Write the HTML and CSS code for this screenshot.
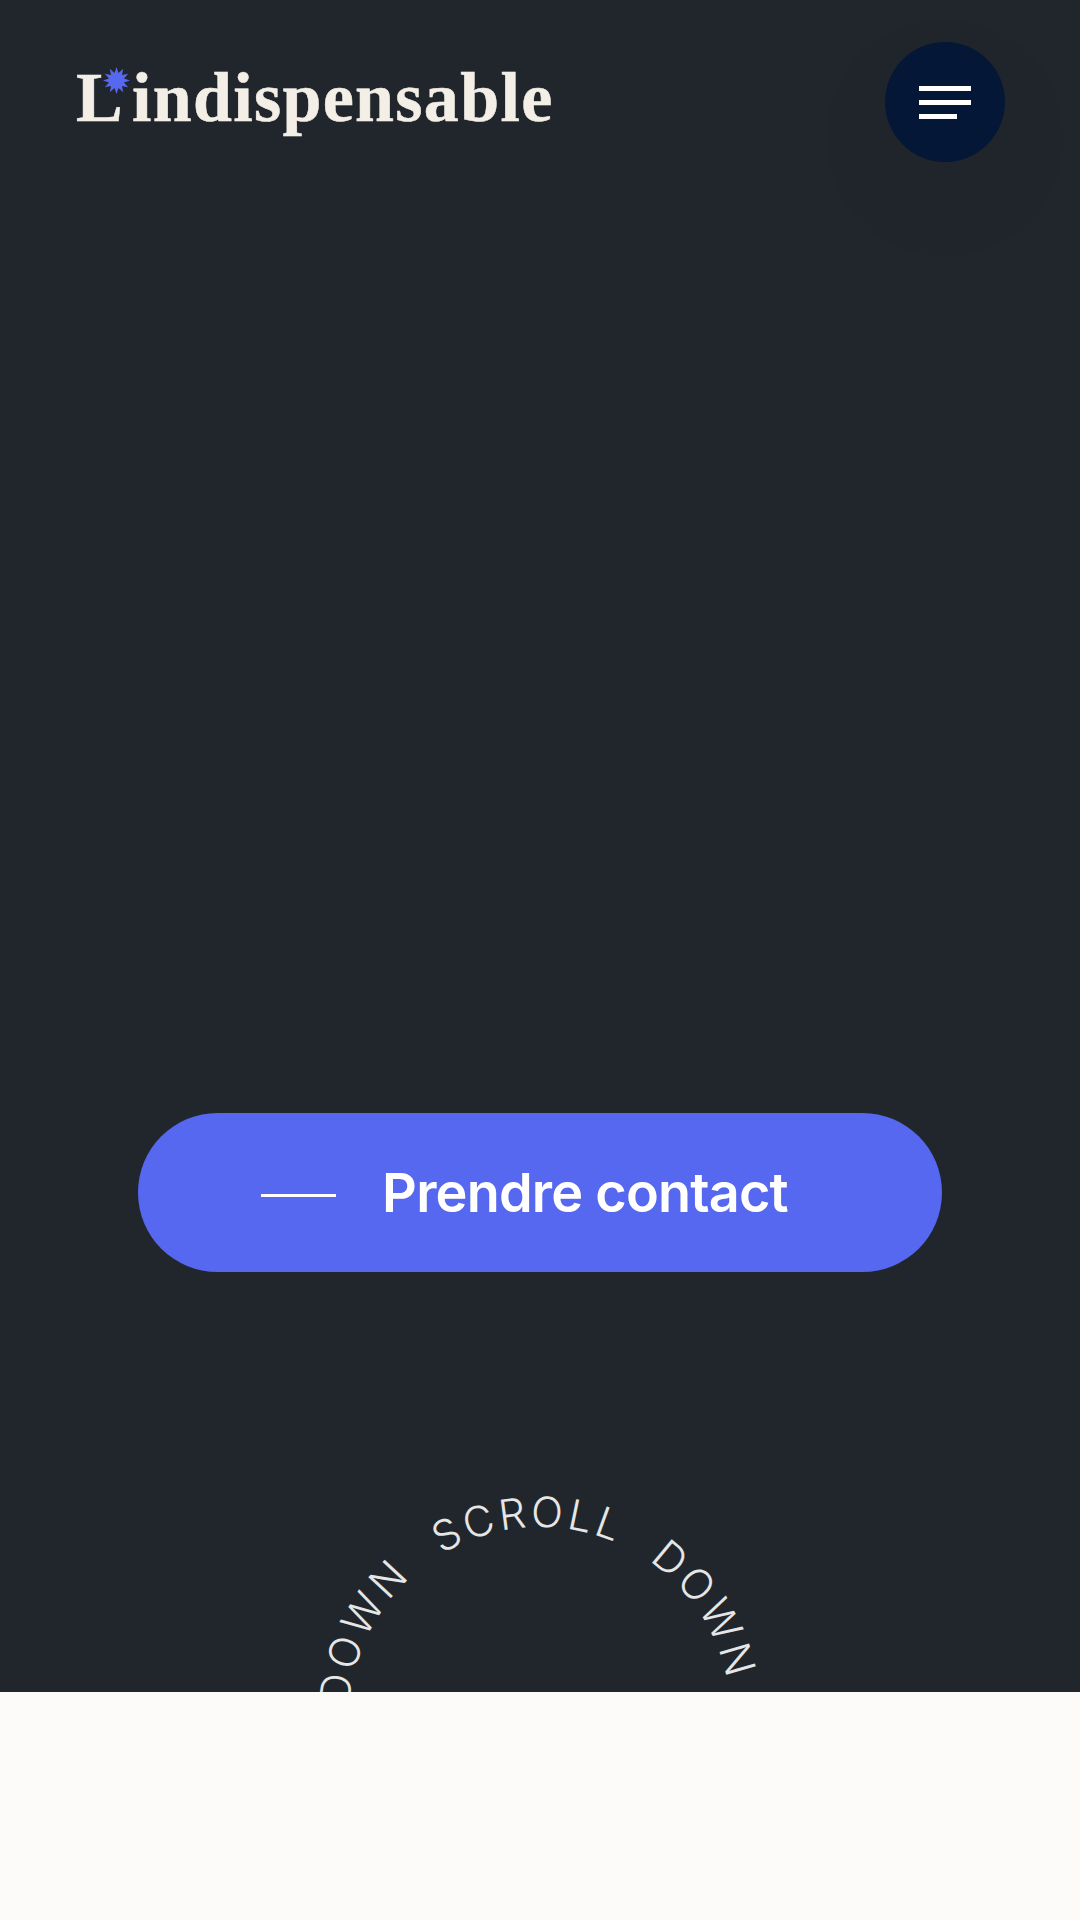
FILE: index.html
```html
<!doctype html>
<html lang="fr">
<head>
  <meta charset="utf-8">
  <title>L'indispensable</title>
  <link rel="stylesheet" href="styles.css">
</head>
<body>
<section class="hero">
  <header class="hero__header">
    <a class="logo" href="#">
      <span class="logo__cap">L</span>indispensable
      <svg class="logo__star" viewBox="-14 -14 28 28">
        <polygon points="0,-14 2.07,-7.73 7,-12.12 5.66,-5.66 12.12,-7 7.73,-2.07 14,0 7.73,2.07 12.12,7 5.66,5.66 7,12.12 2.07,7.73 0,14 -2.07,7.73 -7,12.12 -5.66,5.66 -12.12,7 -7.73,2.07 -14,0 -7.73,-2.07 -12.12,-7 -5.66,-5.66 -7,-12.12 -2.07,-7.73"/>
      </svg>
    </a>
    <button class="menuButton" type="button" aria-label="Menu">
      <span class="menuButton__line"></span>
      <span class="menuButton__line"></span>
      <span class="menuButton__line menuButton__line--short"></span>
    </button>
  </header>

  <a class="cta" href="#">
    <span class="cta__dash"></span>
    Prendre contact
  </a>

  <svg class="scrollRing" viewBox="0 0 480 480">
    <defs>
      <path id="ringPath" d="M240,49 a191,191 0 1,1 -0.01,0"/>
    </defs>
    <g class="scrollRing__text">
      <text transform="rotate(-31 240 240)"><textPath href="#ringPath">SCROLL DOWN</textPath></text>
      <text transform="rotate(89 240 240)"><textPath href="#ringPath">SCROLL DOWN</textPath></text>
      <text transform="rotate(208 240 240)"><textPath href="#ringPath">SCROLL DOWN</textPath></text>
    </g>
  </svg>
</section>
<section class="next"></section>
</body>
</html>
```

FILE: styles.css
```css
body {
  margin: 0;
  background-color: #fcfbf9;
  font-family: "Inter", "Liberation Sans", sans-serif;
}

a {
  text-decoration: none;
}

.hero {
  height: 1692px;
  overflow: hidden;
  display: flex;
  flex-direction: column;
  align-items: center;
  background-color: #21262d;
}

.hero__header {
  flex: none;
  align-self: stretch;
  display: flex;
  justify-content: space-between;
  align-items: flex-start;
  padding: 42px 75px 0 76px;
}

.logo {
  position: relative;
  margin-top: 14px;
  font-family: "Liberation Serif", serif;
  font-size: 70px;
  font-weight: 700;
  line-height: 84px;
  letter-spacing: 1.3px;
  color: #f4efe6;
  -webkit-text-stroke: 0.5px #f4efe6;
}

.logo__cap {
  margin-right: 8px;
}

.logo__star {
  position: absolute;
  left: 27px;
  top: 11px;
  width: 27px;
  height: 27px;
  fill: #5768f0;
}

.menuButton {
  width: 120px;
  height: 120px;
  padding: 0 0 0 34px;
  border: none;
  border-radius: 50%;
  display: flex;
  flex-direction: column;
  justify-content: center;
  align-items: flex-start;
  gap: 9px;
  background-color: #041736;
  box-shadow: 0 36px 100px rgba(0, 0, 0, 0.06);
}

.menuButton__line {
  display: block;
  width: 52px;
  height: 5px;
  background-color: #ffffff;
}

.menuButton__line--short {
  width: 38px;
}

.cta {
  flex: none;
  margin-top: 951px;
  box-sizing: border-box;
  width: 804px;
  height: 159px;
  padding-right: 31px;
  display: flex;
  align-items: center;
  justify-content: center;
  gap: 46px;
  border-radius: 80px;
  background-color: #5667f0;
  color: #ffffff;
  font-size: 54px;
  font-weight: 600;
  letter-spacing: -0.8px;
}

.cta__dash {
  width: 75px;
  height: 3px;
  margin-top: 6px;
  background-color: #ffffff;
}

.scrollRing {
  flex: none;
  margin-top: 206px;
  width: 480px;
  height: 480px;
}

.scrollRing__text {
  font-size: 42px;
  font-weight: 300;
  letter-spacing: 3.4px;
  word-spacing: 20px;
  fill: #e6e6e6;
}

.next {
  height: 228px;
}
```
